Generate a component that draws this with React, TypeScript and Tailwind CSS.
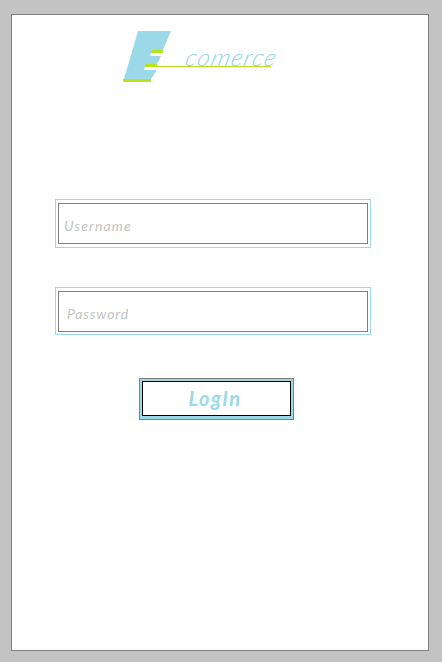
function Logo() {
  return (
    <svg width="156" height="54" viewBox="0 0 156 54" className="block" role="img" aria-label="E comerce">
      <polygon points="15,1 48,1 40,20 28,23 27,26 38,26 34,34 22,37 21,40 34,40 28,49 1,49" fill="#9bd9e9" />
      <g fill="#b5e31c" shapeRendering="crispEdges">
        <rect x="28" y="20" width="12" height="3" />
        <rect x="22" y="34" width="12" height="3" />
        <rect x="34" y="36" width="114" height="1" />
        <rect x="0" y="49" width="28" height="3" />
      </g>
      <text
        x="61"
        y="36"
        fill="#8fd4e7"
        fontSize="24"
        fontStyle="italic"
        fontWeight="300"
        textLength="90"
        lengthAdjust="spacing"
        transform="translate(9 0) skewX(-14)"
        className="font-[Lato,sans-serif]"
      >
        comerce
      </text>
    </svg>
  );
}

export default function App() {
  return (
    <div className="h-[662px] w-[442px] bg-[#c3c3c3] pt-[14px] pl-[11px] font-[Lato,'Open_Sans',sans-serif]">
      <main className="flex h-[637px] w-[418px] flex-col border border-[#7f7f7f] bg-white">
        <div className="mt-[15px] ml-[111px] h-[54px]">
          <Logo />
        </div>
        <div className="mt-[115px] ml-[43px] h-[49px] w-[316px] border border-[#99d9ea] px-[2px] py-[3px]">
          <input
            aria-label="Username"
            placeholder="Username"
            className="block h-[41px] w-[310px] border border-[#7f7f7f] pt-[3px] pl-[5px] text-[14px] tracking-[1.15px] italic outline-none placeholder:text-[#c3c3c3]"
          />
        </div>
        <div className="mt-[39px] ml-[43px] h-[48px] w-[316px] border border-[#99d9ea] px-[2px] pt-[3px] pb-[2px]">
          <input
            aria-label="Password"
            type="password"
            placeholder="Password"
            className="block h-[41px] w-[310px] border border-[#7f7f7f] pt-[3px] pl-[8px] text-[14px] tracking-[0.9px] italic outline-none placeholder:text-[#c3c3c3]"
          />
        </div>
        <button className="mt-[43px] ml-[127px] h-[42px] w-[155px] border border-[#7f7f7f] bg-[#99d9ea] px-[2px] pt-[2px] pb-[3px]">
          <span className="flex h-[35px] items-center justify-center border border-black bg-white pr-[3px] pb-[2px] text-[20px] leading-none font-bold tracking-[1.5px] text-[#99d9ea] italic">
            LogIn
          </span>
        </button>
      </main>
    </div>
  );
}
